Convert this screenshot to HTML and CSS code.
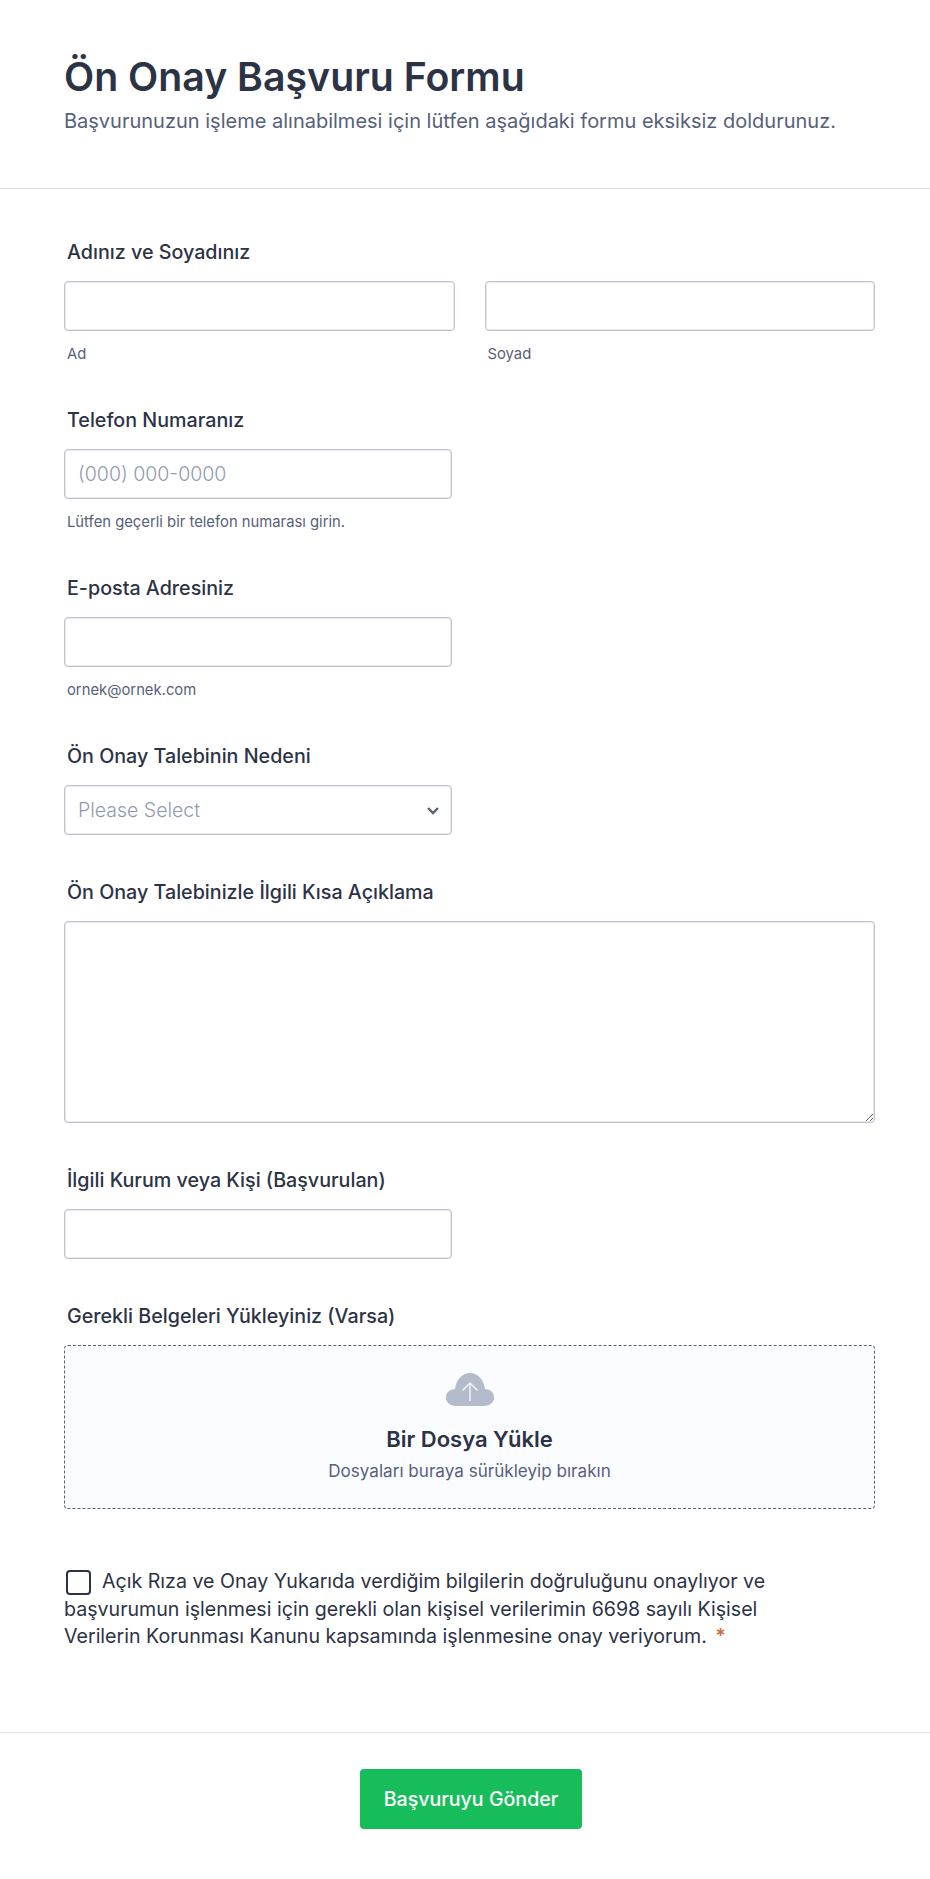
FILE: index.html
```html
<!DOCTYPE html>
<html lang="tr">
<head>
  <meta charset="UTF-8" />
  <title>Ön Onay Başvuru Formu</title>
  <link rel="stylesheet" href="styles.css">
</head>
<body>
  <form class="form">
    <!-- başlık -->
    <header class="form-header">
      <h1 class="form-title">Ön Onay Başvuru Formu</h1>
      <p class="form-subtitle">Başvurunuzun işleme alınabilmesi için lütfen aşağıdaki formu eksiksiz doldurunuz.</p>
    </header>

    <div class="form-body">
      <div class="field">
        <label class="field-label">Adınız ve Soyadınız</label>
        <div class="name-row">
          <div class="name-col">
            <input class="text-input" type="text">
            <div class="sub-label">Ad</div>
          </div>
          <div class="name-col">
            <input class="text-input" type="text">
            <div class="sub-label">Soyad</div>
          </div>
        </div>
      </div>

      <div class="field">
        <label class="field-label">Telefon Numaranız</label>
        <input class="text-input short" type="text" placeholder="(000) 000-0000">
        <div class="sub-label">Lütfen geçerli bir telefon numarası girin.</div>
      </div>

      <div class="field">
        <label class="field-label">E-posta Adresiniz</label>
        <input class="text-input short" type="text">
        <div class="sub-label">ornek@ornek.com</div>
      </div>

      <div class="field">
        <label class="field-label">Ön Onay Talebinin Nedeni</label>
        <div class="select-box">
          <span class="select-text">Please Select</span>
          <svg class="select-arrow" width="14" height="9" viewBox="0 0 14 9"><path d="M2 2l5 5 5-5" fill="none" stroke="#57607a" stroke-width="2.400"/></svg>
        </div>
      </div>

      <div class="field">
        <label class="field-label">Ön Onay Talebinizle İlgili Kısa Açıklama</label>
        <textarea class="text-area"></textarea>
      </div>

      <div class="field">
        <label class="field-label">İlgili Kurum veya Kişi (Başvurulan)</label>
        <input class="text-input short" type="text">
      </div>

      <div class="field">
        <label class="field-label">Gerekli Belgeleri Yükleyiniz (Varsa)</label>
        <div class="upload-box">
          <svg class="upload-icon" width="48" height="33" viewBox="0 0 48 33">
            <path d="M10 33C4 33 0 29 0 24.500 0 19.500 4 16 9 16 10 7 16 0 24 0c8 0 14 7 15 16 5 0 9 3.500 9 8.500 0 4.500-4 8.500-10 8.500z" fill="#b4bbcb"/>
            <path d="M24 28V10M16.500 17.500 24 10l7.500 7.500" fill="none" stroke="#f3f4f8" stroke-width="1.500"/>
          </svg>
          <div class="upload-title">Bir Dosya Yükle</div>
          <div class="upload-hint">Dosyaları buraya sürükleyip bırakın</div>
        </div>
      </div>

      <div class="consent">
        <span class="check-box"></span>Açık Rıza ve Onay Yukarıda verdiğim bilgilerin doğruluğunu onaylıyor ve başvurumun işlenmesi için gerekli olan kişisel verilerimin 6698 sayılı Kişisel Verilerin Korunması Kanunu kapsamında işlenmesine onay veriyorum. <span class="required">*</span>
      </div>
    </div>

    <!-- gönder -->
    <footer class="form-footer">
      <button class="submit-button" type="button">Başvuruyu Gönder</button>
    </footer>
  </form>
</body>
</html>
```

FILE: styles.css
```css
/* genel */
html, body {
  margin: 0;
  padding: 0;
  background: #fff;
  font-family: "Inter", sans-serif;
  color: #2c3345;
}
.form {
  width: 930px;
  height: 1879px;
  display: flex;
  flex-direction: column;
}

/* başlık */
.form-header {
  height: 189px;
  box-sizing: border-box;
  padding: 52px 64px 0;
  border-bottom: 1px solid #dcdee7;
}
.form-title {
  margin: 0;
  font-size: 39.250px;
  line-height: 50px;
  font-weight: 600;
}
.form-subtitle {
  margin: 7px 0 0;
  font-size: 20px;
  line-height: 24px;
  color: #57607a;
}

.form-body {
  flex: 1;
  padding: 49px 55px 0 64px;
}

/* alanlar */
.field {
  margin-bottom: 43px;
}
.field-label {
  display: block;
  margin: 0 0 15px 3px;
  font-size: 19.700px;
  line-height: 28px;
  font-weight: 500;
  color: #2c3345;
}
.name-row {
  display: flex;
  gap: 30px;
}
.name-col {
  flex: 1;
}
.text-input {
  display: block;
  width: 100%;
  height: 50px;
  box-sizing: border-box;
  padding: 0 13px;
  background: #fff;
  border: 1px solid #bfc3d1;
  box-shadow: inset 0 0 0 1px #e9eaf0;
  border-radius: 4px;
  font-family: "Inter", sans-serif;
  font-size: 19.500px;
  font-weight: 300;
}
.text-input.short {
  width: 388px;
}
.text-input::placeholder {
  color: #8f9bb0;
}
.sub-label {
  margin: 15px 0 0 3px;
  font-size: 14.800px;
  line-height: 17px;
  color: #57607a;
}

/* seçim */
.select-box {
  display: flex;
  align-items: center;
  justify-content: space-between;
  width: 388px;
  height: 50px;
  box-sizing: border-box;
  padding: 0 11px 0 13px;
  border: 1px solid #bfc3d1;
  box-shadow: inset 0 0 0 1px #e9eaf0;
  border-radius: 4px;
}
.select-text {
  font-size: 19.500px;
  font-weight: 300;
  color: #8f9bb0;
}

/* metin alanı */
.text-area {
  display: block;
  width: 100%;
  height: 202px;
  box-sizing: border-box;
  background: #fff;
  border: 1px solid #bfc3d1;
  box-shadow: inset 0 0 0 1px #e9eaf0;
  border-radius: 4px;
  outline: none;
}

/* dosya yükleme */
.upload-box {
  display: flex;
  flex-direction: column;
  align-items: center;
  height: 164px;
  box-sizing: border-box;
  padding-top: 27px;
  background: #fbfcff;
  border: 1px dashed #57607a;
  border-radius: 4px;
}
.upload-title {
  margin-top: 18px;
  font-size: 22px;
  line-height: 30px;
  font-weight: 600;
}
.upload-hint {
  margin-top: 5px;
  font-size: 17.100px;
  line-height: 24px;
  color: #57607a;
}

/* onay */
.consent {
  width: 740px;
  margin-top: 59px;
  font-size: 19.600px;
  line-height: 27.500px;
  color: #2c3345;
}
.check-box {
  display: inline-block;
  width: 25px;
  height: 25px;
  box-sizing: border-box;
  margin: 0 11px 0 2px;
  vertical-align: -7px;
  border: 2px solid #2c3345;
  border-radius: 4px;
}
.required {
  margin-left: 3px;
  color: #c8703f;
  font-weight: 600;
}

/* alt kısım */
.form-footer {
  height: 147px;
  box-sizing: border-box;
  padding-top: 36px;
  display: flex;
  justify-content: center;
  border-top: 1px solid #e3e5ec;
}
.submit-button {
  width: 222px;
  height: 60px;
  margin-left: 12px;
  background: #18bd5b;
  color: #fff;
  border: 0;
  border-radius: 4px;
  font-family: "Inter", sans-serif;
  font-size: 19.600px;
  font-weight: 500;
}
```
